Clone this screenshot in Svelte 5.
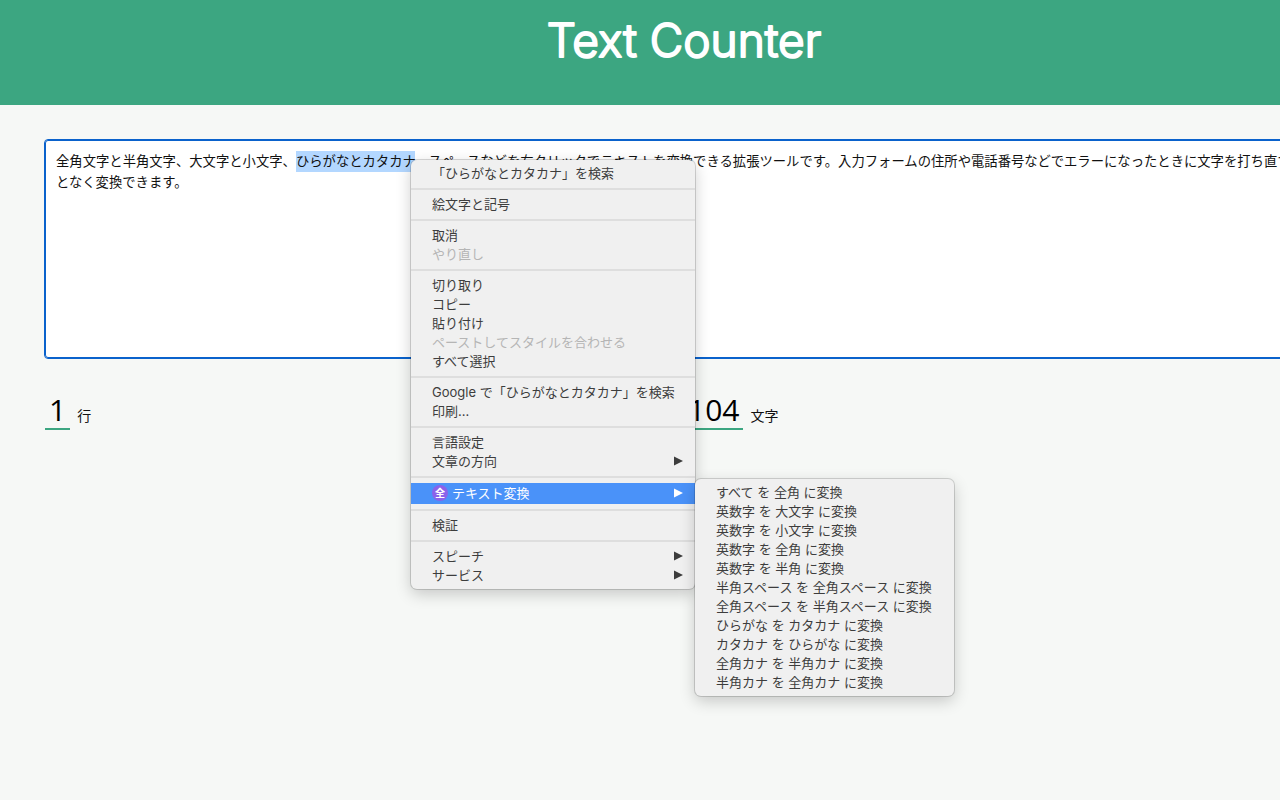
<script lang="ts">
  import { onMount } from "svelte";

  interface MenuItem {
    label: string;
    disabled?: boolean;
    arrow?: boolean;
    active?: boolean;
  }

  const selected = "ひらがなとカタカナ";

  let text = $state(
    "全角文字と半角文字、大文字と小文字、ひらがなとカタカナ、スペースなどを右クリックでテキストを変換できる拡張ツールです。入力フォームの住所や電話番号などでエラーになったときに文字を打ち直すことなく変換できます。",
  );
  let textareaEl: HTMLTextAreaElement | undefined = $state();

  let lineCount = $derived(text.split("\n").length);
  let charCount = $derived(text.length);

  const groups: MenuItem[][] = [
    [{ label: `「${selected}」を検索` }],
    [{ label: "絵文字と記号" }],
    [{ label: "取消" }, { label: "やり直し", disabled: true }],
    [
      { label: "切り取り" },
      { label: "コピー" },
      { label: "貼り付け" },
      { label: "ペーストしてスタイルを合わせる", disabled: true },
      { label: "すべて選択" },
    ],
    [{ label: `Google で「${selected}」を検索` }, { label: "印刷..." }],
    [{ label: "言語設定" }, { label: "文章の方向", arrow: true }],
    [{ label: "テキスト変換", arrow: true, active: true }],
    [{ label: "検証" }],
    [
      { label: "スピーチ", arrow: true },
      { label: "サービス", arrow: true },
    ],
  ];

  const conversions = [
    "すべて を 全角 に変換",
    "英数字 を 大文字 に変換",
    "英数字 を 小文字 に変換",
    "英数字 を 全角 に変換",
    "英数字 を 半角 に変換",
    "半角スペース を 全角スペース に変換",
    "全角スペース を 半角スペース に変換",
    "ひらがな を カタカナ に変換",
    "カタカナ を ひらがな に変換",
    "全角カナ を 半角カナ に変換",
    "半角カナ を 全角カナ に変換",
  ];

  onMount(() => {
    const start = text.indexOf(selected);
    textareaEl?.focus();
    textareaEl?.setSelectionRange(start, start + selected.length);
  });
</script>

<div class="window">
  <div class="page">
    <header>
      <h1>
        <svg class="title">
          <text x="50%" y="49" text-anchor="middle">Text Counter</text>
        </svg>
      </h1>
    </header>

    <main>
      <textarea
        bind:this={textareaEl}
        bind:value={text}
        aria-label="テキスト"
        spellcheck="false"
      ></textarea>

      <div class="stats">
        <div class="stat"><span class="number">{lineCount}</span>行</div>
        <div class="stat"><span class="number">{charCount}</span>文字</div>
      </div>
    </main>

    <div class="menu context-menu" role="menu">
      {#each groups as group, i}
        {#if i > 0}
          <hr />
        {/if}
        {#each group as item}
          <div class="row">
            <button
              class="item"
              class:active={item.active}
              role="menuitem"
              disabled={item.disabled}
            >
              {#if item.active}
                <span class="badge">全</span>
              {/if}
              <span>{item.label}</span>
              {#if item.arrow}
                <svg class="arrow" viewBox="0 0 9 10" aria-hidden="true">
                  <path d="M0 0.5 L9 5 L0 9.5 Z" fill="currentColor" />
                </svg>
              {/if}
            </button>
            {#if item.active}
              <div class="menu submenu" role="menu">
                {#each conversions as label}
                  <button class="item" role="menuitem">{label}</button>
                {/each}
              </div>
            {/if}
          </div>
        {/each}
      {/each}
    </div>
  </div>
</div>

<style>
  :global(body) {
    background: #f6f8f6;
  }
  .window {
    min-height: 100vh;
    overflow: hidden;
  }
  /* the page is a little wider than the window and is cut off at its right edge */
  .page {
    position: relative;
    min-height: 100vh;
    margin-right: -88px;
    font-family: Inter, "Noto Sans CJK JP", sans-serif;
    color: #111;
  }
  header {
    padding: 8px 0 25px;
    background: #3ca681;
  }
  h1 {
    margin: 0;
  }
  .title {
    display: block;
    width: 100%;
    height: 72px;
    fill: #fff;
    stroke: #fff;
    stroke-width: 2px;
    stroke-linejoin: round;
    font-family: Inter, sans-serif;
    font-size: 46px;
    font-weight: 300;
  }
  main {
    padding: 35px 45px;
  }
  textarea {
    display: block;
    box-sizing: border-box;
    width: 100%;
    height: 218px;
    padding: 10px;
    border: 1px solid #0a62cc;
    border-radius: 3px;
    outline: 1px solid #0a62cc;
    background: #fff;
    color: #111;
    font-family: inherit;
    line-height: 21px;
    resize: none;
  }
  textarea::selection {
    background: #b3d7ff;
    color: #111;
  }
  .stats {
    display: grid;
    grid-template-columns: 1fr 1fr;
    margin-top: 36px;
  }
  .stat {
    display: flex;
    align-items: baseline;
    gap: 7px;
    font-size: 14px;
    line-height: 20px;
  }
  .number {
    padding: 0 4px 2px;
    border-bottom: 2px solid #3ca681;
    color: #000;
    font-family: "Open Sans", sans-serif;
    font-size: 30px;
    line-height: 32px;
  }
  .menu {
    position: absolute;
    padding: 4px 0;
    border-radius: 6px;
    background: #f0f0f0;
    box-shadow:
      0 0 0 1px rgba(0, 0, 0, 0.15),
      0 5px 16px rgba(0, 0, 0, 0.2);
  }
  .context-menu {
    top: 160px;
    left: 411px;
    width: 284px;
  }
  .submenu {
    top: -4px;
    left: 100%;
    z-index: 1;
    width: 259px;
  }
  .row {
    position: relative;
  }
  .item {
    display: flex;
    align-items: center;
    width: 100%;
    height: 19px;
    padding: 0 12px 1px 21px;
    border: 0;
    background: none;
    color: #3d3d3d;
    font-family: inherit;
    font-size: 13px;
    line-height: 18px;
    text-align: left;
    white-space: nowrap;
  }
  .item:disabled {
    color: #b5b5b5;
  }
  .item.active {
    height: 21px;
    background: #4a92f9;
    color: #fff;
  }
  .badge {
    width: 16px;
    height: 16px;
    margin-right: 4px;
    border-radius: 50%;
    background: #8b62ea;
    font-size: 10px;
    font-weight: 700;
    line-height: 16px;
    text-align: center;
  }
  .arrow {
    width: 9px;
    height: 10px;
    margin-left: auto;
  }
  hr {
    height: 2px;
    margin: 5px 0;
    border: 0;
    background: #dedede;
  }
</style>
